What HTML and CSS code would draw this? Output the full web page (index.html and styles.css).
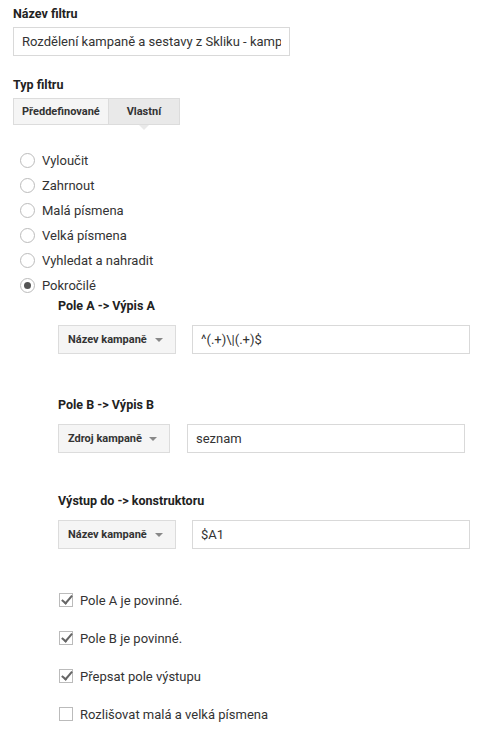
FILE: index.html
```html
<!DOCTYPE html>
<html lang="cs">
<head>
  <meta charset="UTF-8">
  <title>Filtr</title>
  <link rel="stylesheet" href="styles.css">
</head>
<body>
  <div class="pole">
    <div class="nadpis">Název filtru</div>
    <input class="vstup nazev" type="text" value="Rozdělení kampaně a sestavy z Skliku - kampaně">
  </div>

  <div class="pole typ">
    <div class="nadpis">Typ filtru</div>
    <div class="taby">
      <span class="tab">Předdefinované</span>
      <span class="tab aktivni">Vlastní</span>
    </div>
  </div>

  <ul class="volby">
    <li><span class="radio"></span>Vyloučit</li>
    <li><span class="radio"></span>Zahrnout</li>
    <li><span class="radio"></span>Malá písmena</li>
    <li><span class="radio"></span>Velká písmena</li>
    <li><span class="radio"></span>Vyhledat a nahradit</li>
    <li><span class="radio zapnuto"></span>Pokročilé</li>
  </ul>

  <div class="pokrocile">
    <div class="blok prvni">
      <div class="nadpis">Pole A -&gt; Výpis A</div>
      <div class="radek">
        <span class="vyber siroky">Název kampaně <i class="sipka"></i></span>
        <input class="vstup maly" type="text" value="^(.+)\|(.+)$">
      </div>
    </div>

    <div class="blok">
      <div class="nadpis">Pole B -&gt; Výpis B</div>
      <div class="radek">
        <span class="vyber">Zdroj kampaně <i class="sipka"></i></span>
        <input class="vstup" type="text" value="seznam">
      </div>
    </div>

    <div class="blok posledni">
      <div class="nadpis">Výstup do -&gt; konstruktoru</div>
      <div class="radek">
        <span class="vyber siroky">Název kampaně <i class="sipka"></i></span>
        <input class="vstup" type="text" value="$A1">
      </div>
    </div>

    <ul class="zaskrtnuti">
      <li><span class="box ano"></span>Pole A je povinné.</li>
      <li><span class="box ano"></span>Pole B je povinné.</li>
      <li><span class="box ano"></span>Přepsat pole výstupu</li>
      <li><span class="box"></span>Rozlišovat malá a velká písmena</li>
    </ul>
  </div>
</body>
</html>
```

FILE: styles.css
```css
body {
  font-family: Roboto, "Noto Sans", Arial, sans-serif;
  color: #222;
  background-color: #fff;
  margin: 0;
  padding: 6px 13px;
  font-size: 13px;
}

.nadpis {
  font-weight: bold;
  font-size: 12.5px;
  color: #222;
  line-height: 15px;
}

.vstup {
  display: block;
  box-sizing: border-box;
  height: 29px;
  padding: 0 8px;
  border: 1px solid #d9d9d9;
  font-family: inherit;
  font-size: 13px;
  color: #333;
  outline: none;
}

.nazev {
  width: 277px;
  margin-top: 6px;
}

.typ {
  margin-top: 21px;
}

.taby {
  display: flex;
  margin-top: 6px;
  width: 167px;
}

.tab {
  position: relative;
  box-sizing: border-box;
  height: 27px;
  line-height: 25px;
  font-size: 11px;
  font-weight: bold;
  color: #333;
  background-color: #f5f5f5;
  border: 1px solid #dcdcdc;
  padding: 0 8px;
}

.tab.aktivni {
  background-color: #e9e9e9;
  border-left: none;
  flex: 1;
  text-align: center;
}

/* sipka pod vybranym tabem */
.tab.aktivni::after {
  content: "";
  position: absolute;
  left: 50%;
  bottom: -6px;
  margin-left: -5px;
  border-left: 5px solid transparent;
  border-right: 5px solid transparent;
  border-top: 5px solid #e9e9e9;
}

.volby {
  list-style: none;
  margin: 23px 0 0 0;
  padding: 0 0 0 7px;
}

.volby li {
  display: flex;
  align-items: center;
  height: 25px;
  color: #333;
}

.radio {
  box-sizing: border-box;
  width: 15px;
  height: 15px;
  border: 1px solid #bbb;
  border-radius: 50%;
  margin-right: 7px;
  position: relative;
}

.radio.zapnuto::after {
  content: "";
  position: absolute;
  left: 3px;
  top: 3px;
  width: 7px;
  height: 7px;
  border-radius: 50%;
  background-color: #555;
}

.pokrocile {
  padding-left: 45px;
  margin-top: 0;
}

.blok {
  height: 96px;
}

.blok.prvni {
  height: 99px;
}

.blok.posledni {
  height: 88px;
}

.radek {
  display: flex;
  align-items: center;
  margin-top: 12px;
}

.vyber {
  display: flex;
  align-items: center;
  box-sizing: border-box;
  height: 29px;
  width: 112px;
  padding: 0 0 0 9px;
  font-size: 11px;
  font-weight: bold;
  color: #333;
  background-color: #f5f5f5;
  border: 1px solid #dcdcdc;
  margin-right: 17px;
}

.vyber.siroky {
  width: 118px;
  margin-right: 16px;
}

.sipka {
  margin-left: auto;
  margin-right: 12px;
  border-left: 4px solid transparent;
  border-right: 4px solid transparent;
  border-top: 4px solid #888;
}

.radek .vstup {
  width: 278px;
}

.zaskrtnuti {
  list-style: none;
  margin: 0;
  padding: 0 0 0 1px;
}

.zaskrtnuti li {
  display: flex;
  align-items: center;
  height: 38px;
  color: #333;
}

.box {
  box-sizing: border-box;
  width: 14px;
  height: 14px;
  border: 1px solid #bbb;
  margin-right: 7px;
  position: relative;
}

.box.ano::after {
  content: "";
  position: absolute;
  left: 4px;
  top: -1px;
  width: 4px;
  height: 9px;
  border-right: 2px solid #666;
  border-bottom: 2px solid #666;
  transform: rotate(40deg);
}
```
